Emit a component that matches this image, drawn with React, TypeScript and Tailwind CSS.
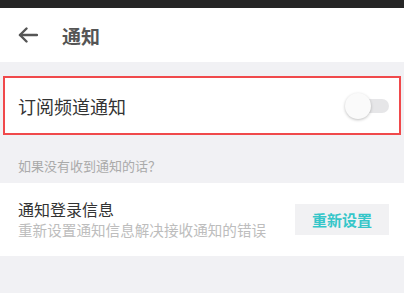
import React from 'react';

const font = { fontFamily: '"Noto Sans CJK SC", "Noto Sans", sans-serif' };

const BackArrow = () => (
  <svg width="20" height="16" viewBox="0 0 20 16" fill="none" stroke="#555" strokeWidth="2.4" strokeLinecap="round" strokeLinejoin="round">
    <path d="M19 8H2" />
    <path d="M8.5 1.5L2 8l6.5 6.5" />
  </svg>
);

export default function App() {
  return (
    <div className="w-[404px] h-[293px] overflow-hidden bg-[#f1f1f4] flex flex-col" style={font}>
      {/* Status bar */}
      <div className="h-[8px] bg-[#262626]" />

      {/* Header */}
      <div className="h-[54px] bg-white flex items-center pl-[18px]">
        <BackArrow />
        <span className="ml-[24px] text-[19px] leading-none text-[#555] font-bold">通知</span>
      </div>

      {/* Subscription toggle row */}
      <div className="mt-[14px] mx-[3px] h-[59px] bg-white border-2 border-[#f0494b] flex items-center justify-between pl-[13px] pr-[10px]">
        <span className="text-[18px] leading-none text-[#333]">订阅频道通知</span>
        <div className="relative w-[44px] h-[26px] flex items-center">
          <div className="absolute right-0 w-[38px] h-[14px] rounded-full bg-[#e6e6e8]" />
          <div className="absolute left-0 w-[26px] h-[26px] rounded-full bg-[#fafafa] shadow-[0_1px_3px_rgba(0,0,0,0.25)]" />
        </div>
      </div>

      {/* Hint */}
      <div className="h-[48px] flex items-end pb-[11px] pl-[18px]">
        <span className="text-[13px] leading-none text-[#aaa]">如果没有收到通知的话？</span>
      </div>

      {/* Reset row */}
      <div className="h-[73px] bg-white flex items-center justify-between pl-[18px] pr-[15px]">
        <div className="flex flex-col gap-[6px]">
          <span className="text-[16px] leading-none text-[#333]">通知登录信息</span>
          <span className="text-[14.6px] leading-none text-[#bdbdbd]">重新设置通知信息解决接收通知的错误</span>
        </div>
        <button className="w-[94px] h-[31px] bg-[#f1f1f3] text-[#35c6c9] text-[15px] font-bold leading-none">
          重新设置
        </button>
      </div>
    </div>
  );
}
